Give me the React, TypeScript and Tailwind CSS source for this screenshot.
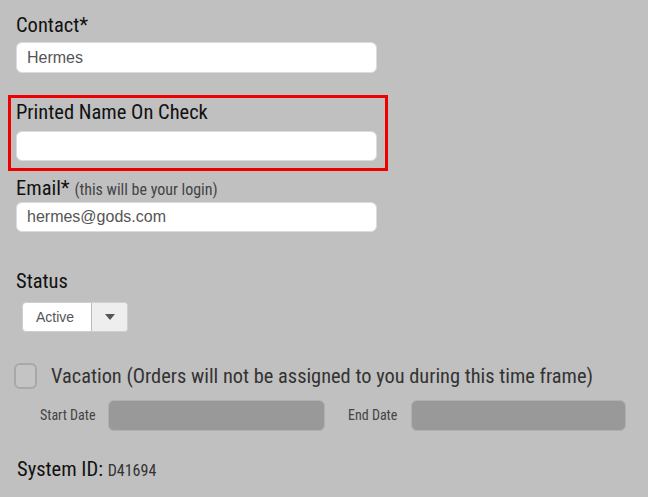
const cond = "font-['Roboto_Condensed','Liberation_Sans_Narrow','DejaVu_Sans_Condensed',sans-serif]";

export default function App() {
  return (
    <div className={`min-h-[497px] w-[648px] bg-[#c0c0c0] text-[#111] ${cond} pt-[13px]`}>
      {/* Contact */}
      <div className="px-[16px]">
        <label className="block text-[20.5px] leading-[25px]">Contact*</label>
        <input
          defaultValue="Hermes"
          className="mt-[4px] w-[361px] h-[31px] rounded-[6px] bg-white border border-[#dcdcdc] px-[10px] text-[16px] text-[#555] font-['Liberation_Sans',Arial,sans-serif] outline-none"
        />
      </div>

      {/* Printed Name On Check */}
      <div className="mt-[22px] ml-[8px] w-[380px] border-[3px] border-[#ee0000] px-[5px] pt-[2px] pb-[7px]">
        <label className="block text-[20.5px] leading-[25px]">Printed Name On Check</label>
        <input className="mt-[6px] w-[361px] h-[30px] rounded-[6px] bg-white border border-[#dcdcdc] outline-none" />
      </div>

      {/* Email */}
      <div className="px-[16px] mt-[5px]">
        <label className="block text-[20.5px] leading-[25px]">
          Email* <span className="text-[16px] text-[#444]">(this will be your login)</span>
        </label>
        <input
          defaultValue="hermes@gods.com"
          className="w-[361px] h-[30px] rounded-[6px] bg-white border border-[#dcdcdc] px-[10px] text-[16px] text-[#555] font-['Liberation_Sans',Arial,sans-serif] outline-none"
        />
      </div>

      {/* Status */}
      <div className="px-[16px] mt-[37px]">
        <label className="block text-[20.5px] leading-[25px]">Status</label>
        <div className="mt-[8px] ml-[6px] flex w-[106px] h-[30px] rounded-[4px] border border-[#cfcfcf] bg-white overflow-hidden">
          <div className="w-[69px] flex items-center pl-[13px] border-r border-[#bbb] text-[14px] text-[#555] font-['Liberation_Sans',Arial,sans-serif]">
            Active
          </div>
          <div className="flex-1 flex items-center justify-center bg-[#eeeeee]">
            <svg width="10" height="6" viewBox="0 0 10 6">
              <path d="M0 0h10L5 6z" fill="#555" />
            </svg>
          </div>
        </div>
      </div>

      {/* Vacation */}
      <div className="px-[14px] mt-[31px] flex items-center gap-[14px]">
        <div className="w-[23px] h-[26px] rounded-[6px] border-2 border-[#a8a8a8] bg-[#c4c4c4]" />
        <span className="text-[20.4px] leading-[26px] text-[#333]">
          Vacation (Orders will not be assigned to you during this time frame)
        </span>
      </div>

      <div className="mt-[11px] flex items-center pl-[40px]">
        <span className="text-[14px] text-[#444] w-[68px]">Start Date</span>
        <div className="w-[217px] h-[31px] rounded-[6px] bg-[#999999] border border-[#b0b0b0]" />
        <span className="ml-[23px] text-[14px] text-[#444] w-[63px]">End Date</span>
        <div className="w-[215px] h-[31px] rounded-[6px] bg-[#999999] border border-[#b0b0b0]" />
      </div>

      {/* System ID */}
      <div className="px-[17px] mt-[26px] text-[20.5px] leading-[25px]">
        System ID: <span className="text-[16px] text-[#333]">D41694</span>
      </div>
    </div>
  );
}
